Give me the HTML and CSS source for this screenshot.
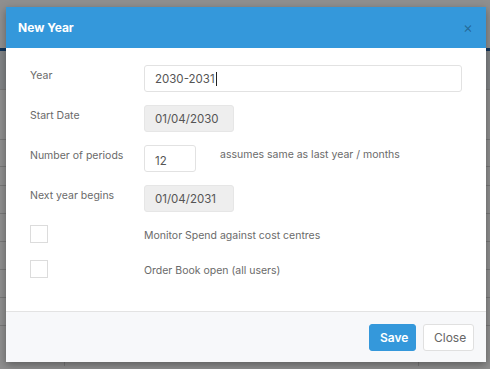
FILE: index.html
```html
<!DOCTYPE html>
<html lang="en">
<head>
    <meta charset="UTF-8">
    <meta name="viewport" content="width=device-width, initial-scale=1.0">
    <title>New Year</title>
    <link rel="stylesheet" href="styles.css">
</head>
<body>
    <div class="page">
        <div class="page-top"></div>
        <div class="page-bar"></div>
        <div class="page-head"></div>
        <div class="page-row tall"></div>
        <div class="page-row short"></div>
        <div class="page-row tiny"></div>
        <div class="page-row"></div>
        <div class="page-row"></div>
        <div class="page-row"></div>
        <div class="page-row"></div>
        <div class="page-row"></div>
        <div class="page-row last">
            <span class="col-line one"></span>
            <span class="col-line two"></span>
        </div>
    </div>

    <div class="backdrop"></div>

    <div class="modal">
        <div class="modal-header">
            <h4 class="modal-title">New Year</h4>
            <span class="close">&times;</span>
        </div>

        <div class="modal-body">
            <div class="form-row">
                <label class="control-label">Year</label>
                <div class="form-control wide">2030-2031<span class="caret"></span></div>
            </div>
            <div class="form-row">
                <label class="control-label">Start Date</label>
                <div class="form-control date" >01/04/2030</div>
            </div>
            <div class="form-row">
                <label class="control-label">Number of periods</label>
                <div class="form-control small">12</div>
                <span class="help-text">assumes same as last year / months</span>
            </div>
            <div class="form-row">
                <label class="control-label">Next year begins</label>
                <div class="form-control date">01/04/2031</div>
            </div>
            <div class="check-row">
                <span class="checkbox"></span>
                <span class="check-label">Monitor Spend against cost centres</span>
            </div>
            <div class="check-row">
                <span class="checkbox"></span>
                <span class="check-label">Order Book open (all users)</span>
            </div>
        </div>

        <div class="modal-footer">
            <button class="btn btn-primary">Save</button>
            <button class="btn btn-default">Close</button>
        </div>
    </div>
</body>
</html>
```

FILE: styles.css
```css
body {
    margin: 0;
    font-family: 'Inter', 'Liberation Sans', sans-serif;
    width: 490px;
    height: 369px;
    overflow: hidden;
    position: relative;
    background-color: #fff;
}

/* page behind the dialog */
.page {
    display: flex;
    flex-direction: column;
}
.page-top {
    height: 48px;
    background-color: #fff;
}
.page-bar {
    height: 3px;
    background-color: #1f5fa3;
}
.page-head {
    height: 38px;
    background-color: #e8ecef;
    border-bottom: 1px solid #d6d6d6;
}
.page-row {
    height: 27px;
    border-bottom: 1px solid #d6d6d6;
    position: relative;
}
.page-row.tall {
    height: 49px;
}
.page-row.short {
    height: 26px;
}
.page-row.tiny {
    height: 18px;
}
.page-row.last {
    height: 40px;
    border-bottom: none;
}
.col-line {
    position: absolute;
    top: 0;
    bottom: 0;
    width: 1px;
    background-color: #d6d6d6;
}
.col-line.one {
    left: 64px;
}
.col-line.two {
    left: 418px;
}

.backdrop {
    position: absolute;
    inset: 0;
    background-color: rgba(0, 0, 0, 0.44);
}

/* dialog */
.modal {
    position: absolute;
    left: 6px;
    top: 7px;
    width: 480px;
    background-color: #fff;
    box-shadow: 0 3px 8px rgba(0, 0, 0, 0.35);
}
.modal-header {
    height: 41px;
    background-color: #3498db;
    display: flex;
    align-items: center;
    justify-content: space-between;
    padding: 0 12px 0 12px;
}
.modal-title {
    margin: 0;
    color: #fff;
    font-size: 12px;
    font-weight: 700;
}
.close {
    color: rgba(0, 0, 0, 0.3);
    font-size: 15px;
    line-height: 1;
    margin-right: 1px;
}

.modal-body {
    height: 263px;
    box-sizing: border-box;
    padding: 17px 24px 0 24px;
    display: flex;
    flex-direction: column;
    gap: 13px;
}
.form-row {
    display: flex;
    align-items: flex-start;
    height: 27px;
}
.control-label {
    width: 114px;
    flex-shrink: 0;
    padding-top: 4px;
    font-size: 10.5px;
    line-height: 14px;
    color: #6a6a6a;
}
.form-control {
    box-sizing: border-box;
    height: 27px;
    border: 1px solid #e2e2e2;
    border-radius: 3px;
    padding: 0 10px;
    display: flex;
    align-items: center;
    font-size: 11.5px;
    color: #555;
    background-color: #fff;
}
.form-control.wide {
    width: 318px;
}
.form-control.date {
    width: 90px;
    background-color: #eee;
    border-color: #e6e6e6;
}
.form-control.small {
    width: 52px;
    padding-top: 4px;
}
.caret {
    display: inline-block;
    width: 1px;
    height: 14px;
    background-color: #222;
    margin-left: 1px;
}
.help-text {
    margin-left: 24px;
    padding-top: 3px;
    font-size: 10.5px;
    line-height: 14px;
    color: #6a6a6a;
}
.check-row {
    display: flex;
    align-items: flex-start;
    height: 22px;
}
.checkbox {
    box-sizing: border-box;
    width: 18px;
    height: 18px;
    border: 1px solid #dcdcdc;
    background-color: #fff;
    margin-right: 96px;
}
.check-label {
    font-size: 10.5px;
    line-height: 18px;
    padding-top: 2px;
    color: #6a6a6a;
}

.modal-footer {
    height: 51px;
    box-sizing: border-box;
    border-top: 1px solid #e3e3e3;
    background-color: #f7f8fa;
    display: flex;
    align-items: flex-start;
    justify-content: flex-end;
    gap: 7px;
    padding: 12px 12px 0 0;
}
.btn {
    height: 27px;
    box-sizing: border-box;
    border-radius: 3px;
    font-family: inherit;
    font-size: 12px;
    padding: 0 10px;
    cursor: pointer;
}
.btn-primary {
    width: 47px;
    background-color: #3498db;
    border: 1px solid #3498db;
    color: #fff;
    font-weight: 600;
}
.btn-default {
    width: 51px;
    background-color: #fff;
    border: 1px solid #e0e0e0;
    color: #666;
}
```
